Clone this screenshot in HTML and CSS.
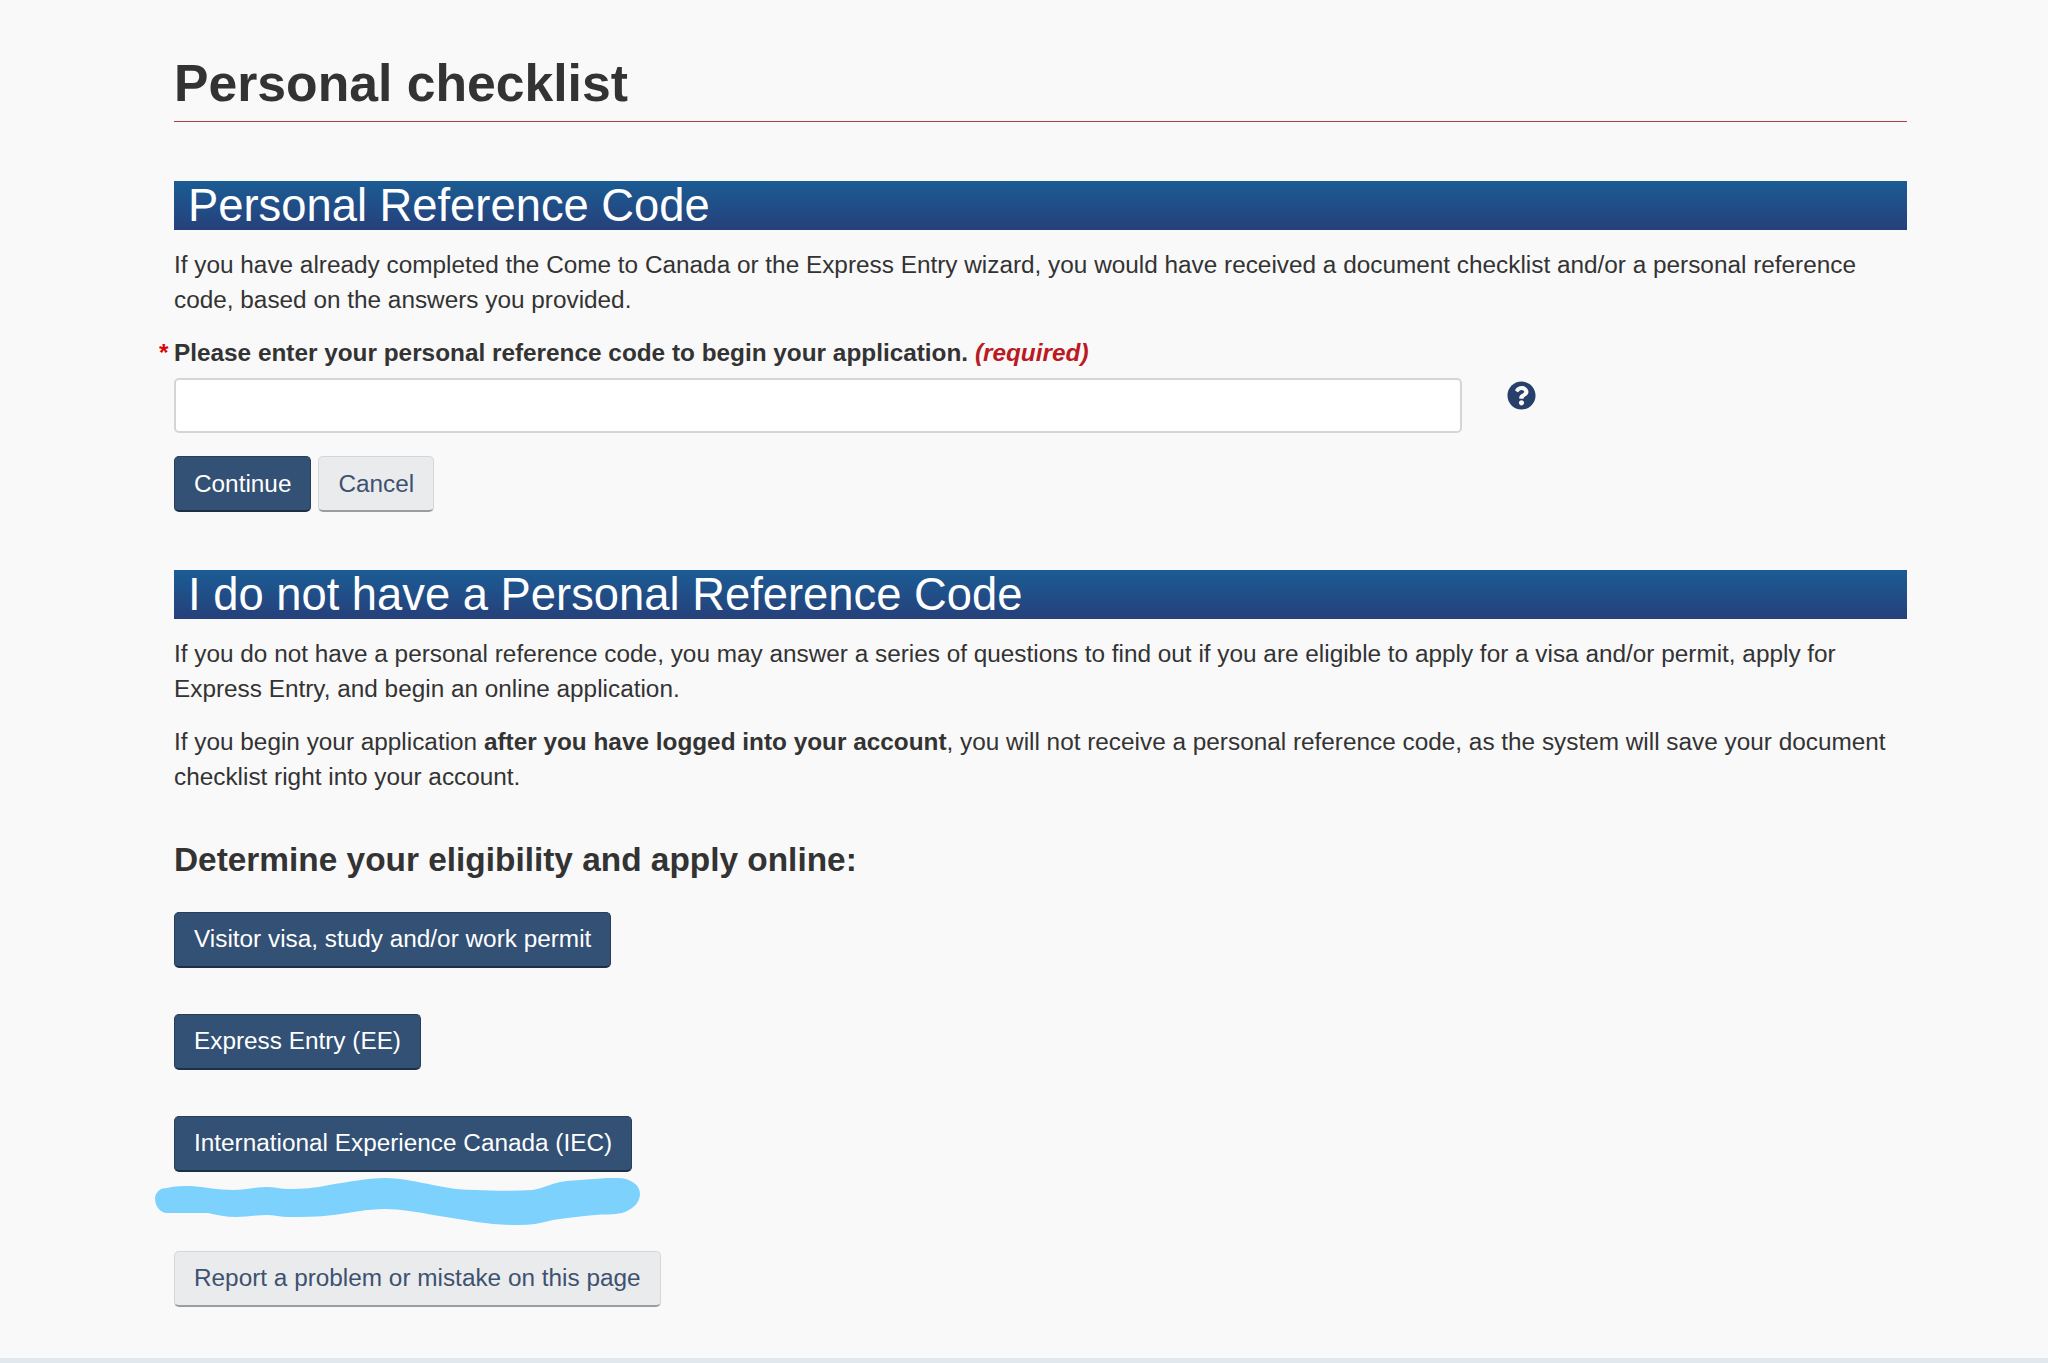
FILE: index.html
```html
<!DOCTYPE html>
<html lang="en">
  <head>
    <meta charset="UTF-8" />
    <meta name="viewport" content="width=device-width, initial-scale=1.0" />
    <title>Personal checklist</title>
    <link rel="stylesheet" href="styles.css">
  </head>
  <body>
    <main class="container">
      <h1>Personal checklist</h1>

      <h2 class="bar bar-first">Personal Reference Code</h2>
      <p>If you have already completed the Come to Canada or the Express Entry wizard, you would have received a document checklist and/or a personal reference code, based on the answers you provided.</p>

      <form class="code-form">
        <label for="code" class="code-label">
          <span class="star">*</span>
          Please enter your personal reference code to begin your application.
          <em class="required">(required)</em>
        </label>
        <div class="code-row">
          <input type="text" id="code" name="code" />
          <svg class="help" viewBox="0 0 512 512" aria-hidden="true">
            <path d="M504 256c0 137-111 248-248 248S8 393 8 256 119 8 256 8s248 111 248 248zM262.7 90c-54.500 0-89.300 23-116.600 63.800-3.500 5.300-2.400 12.400 2.700 16.200l34.700 26.300c5.200 3.900 12.600 3 16.700-2.100 17.900-22.700 30.100-35.800 57.300-35.800 20.400 0 45.700 13.100 45.700 32.900 0 15-12.400 22.700-32.600 34-23.600 13.200-54.800 29.700-54.800 70.900V300c0 6.600 5.400 12 12 12h56c6.600 0 12-5.400 12-12v-1.300c0-28.600 83.400-29.800 83.400-107.100 0-58.200-60.400-102.600-117-102.600zM256 339c-25.400 0-46 20.600-46 46s20.600 46 46 46 46-20.600 46-46-20.600-46-46-46z" />
          </svg>
        </div>
        <div class="actions">
          <button type="submit" class="btn btn-primary">Continue</button>
          <button type="button" class="btn btn-default">Cancel</button>
        </div>
      </form>

      <h2 class="bar bar-second">I do not have a Personal Reference Code</h2>
      <p>If you do not have a personal reference code, you may answer a series of questions to find out if you are eligible to apply for a visa and/or permit, apply for Express Entry, and begin an online application.</p>
      <p class="after">If you begin your application <strong>after you have logged into your account</strong>, you will not receive a personal reference code, as the system will save your document checklist right into your account.</p>

      <h3>Determine your eligibility and apply online:</h3>

      <div class="apply-list">
        <a class="btn btn-primary">Visitor visa, study and/or work permit</a>
        <a class="btn btn-primary">Express Entry (EE)</a>
        <div class="marked">
          <a class="btn btn-primary">International Experience Canada (IEC)</a>
          <svg class="scribble" viewBox="0 0 485 47" aria-hidden="true">
            <path d="M0 20C1 13 6 10 12 10C20 8 28 8 36 8C50 9 64 12 77 12C90 12 100 9 112 9C120 9 126 11 133 11C148 11 160 10 174 7C193 4 212 0 230 0C248 0 262 4 278 7C292 10 306 12 322 12C340 13 360 13 378 12C388 10 396 6 405 4C416 2 428 2 440 1C450 0 460 -1 471 1C480 4 485 9 485 16C485 25 477 32 467 35C458 37 449 36 440 37C426 38 412 40 398 42C387 45 376 47 364 47C349 47 335 46 322 44C307 42 293 39 278 37C262 34 246 31 230 31C212 31 195 35 178 37C163 39 148 39 133 39C126 39 119 37 112 37C102 37 92 39 81 39C71 39 62 37 53 35C40 35 25 35 12 35C5 35 0 28 0 20Z" />
          </svg>
        </div>
      </div>

      <a class="btn btn-default btn-report">Report a problem or mistake on this page</a>
    </main>
    <footer class="page-foot"></footer>
  </body>
</html>
```

FILE: styles.css
```css
html,
body {
  margin: 0;
  padding: 0;
}
body {
  font-family: "Liberation Sans", Arial, sans-serif;
  font-size: 24.35px;
  line-height: 35px;
  color: #333;
  background-color: #f9f9f9;
  display: flex;
  flex-direction: column;
  min-height: 100vh;
}
.container {
  width: 1733px;
  margin-left: 174px;
  flex: 1;
}
h1 {
  margin: 0;
  padding-top: 52px;
  height: 69px;
  font-size: 51.7px;
  line-height: 62px;
  font-weight: bold;
  border-bottom: 1px solid #af3c43;
}
.bar {
  margin: 0;
  height: 49px;
  padding-left: 14px;
  font-size: 45.35px;
  line-height: 49px;
  font-weight: normal;
  color: #fff;
  background: linear-gradient(#1b5c94, #26407a);
}
.bar-first {
  margin-top: 59px;
}
.bar-second {
  margin-top: 58px;
}
p {
  margin: 0;
  padding-top: 17px;
}
.after {
  padding-top: 18px;
}
.code-label {
  display: block;
  position: relative;
  margin-top: 18px;
  font-weight: bold;
}
.star {
  position: absolute;
  left: -15px;
  color: #d3080c;
}
.required {
  color: #bc1a22;
}
.code-row {
  display: flex;
  align-items: flex-start;
  margin-top: 8px;
}
input {
  width: 1288px;
  height: 55px;
  box-sizing: border-box;
  padding: 8px 14px;
  border: 2px solid #d5d5d5;
  border-radius: 5px;
  background: #fff;
  font-size: 24px;
}
.help {
  width: 29px;
  height: 29px;
  margin-left: 45px;
  margin-top: 3px;
  fill: #26406b;
}
.actions {
  display: flex;
  gap: 7px;
  margin-top: 23px;
}
.btn {
  display: inline-block;
  box-sizing: border-box;
  height: 56px;
  padding: 0 19px;
  font-family: inherit;
  font-size: 24.35px;
  line-height: 52px;
  border-radius: 5px;
  border: 1px solid transparent;
  border-bottom-width: 2px;
  cursor: pointer;
}
.btn-primary {
  color: #fff;
  background-color: #335075;
  border-color: #293e5a;
  border-bottom-color: #1f2f46;
}
.btn-default {
  color: #3e5270;
  background-color: #eaebed;
  border-color: #d4d6d9;
  border-bottom-color: #9a9da2;
}
h3 {
  margin: 46px 0 0;
  font-size: 33.4px;
  line-height: 40px;
  font-weight: bold;
}
.apply-list {
  display: flex;
  flex-direction: column;
  align-items: flex-start;
  gap: 46px;
  margin-top: 32px;
}
.marked {
  position: relative;
}
.scribble {
  position: absolute;
  left: -19px;
  top: 62px;
  width: 485px;
  height: 47px;
  fill: #7dd2fd;
}
.btn-report {
  margin-top: 79px;
}
.page-foot {
  height: 5px;
  background-color: #e1e9ee;
}
```
